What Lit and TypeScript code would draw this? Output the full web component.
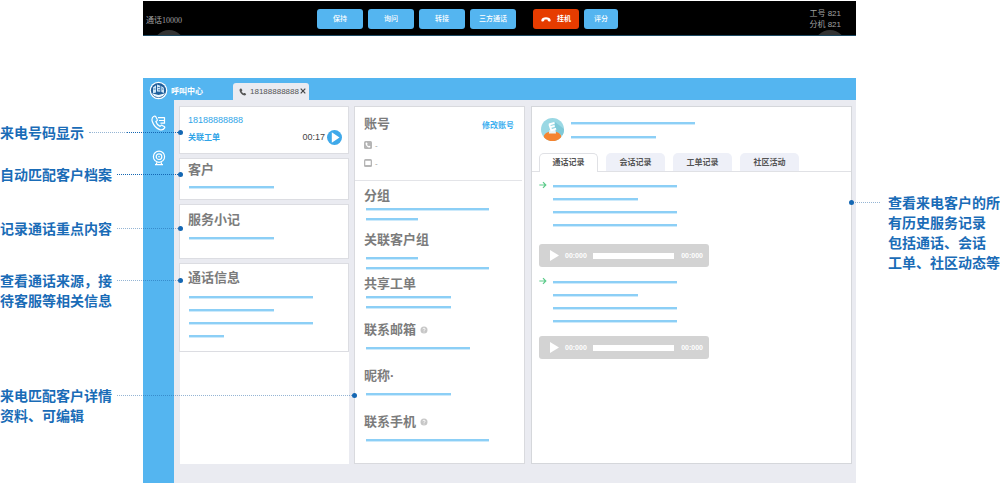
import { LitElement, html, css, svg } from "lit";
import { customElement, property } from "lit/decorators.js";
import { classMap } from "lit/directives/class-map.js";
import { styleMap } from "lit/directives/style-map.js";

const base = css`
  * { box-sizing: border-box; }
  button, a, h2, p, input { margin: 0; padding: 0; font: inherit; color: inherit; }
  button { border: 0; background: none; cursor: pointer; }
  a { text-decoration: none; }
  svg { display: block; }
`;

/* A stack of placeholder text lines, one per width. */
@customElement("text-lines")
class TextLines extends LitElement {
  @property({ attribute: false }) widths: number[] = [];

  static styles = css`
    :host { display: flex; flex-direction: column; gap: var(--line-gap, 11px); }
    .line { height: 2px; background: #8ccff6; box-shadow: 0 1px 0 #cdeafb; max-width: 100%; }
  `;

  render() {
    return this.widths.map((w) => html`<div class="line" style=${styleMap({ width: `${w}px` })}></div>`);
  }
}

@customElement("call-bar")
class CallBar extends LitElement {
  static styles = [base, css`
    :host {
      position: relative; overflow: hidden; display: flex; align-items: center;
      height: 35px; padding: 2px 15px 0 3px; background: #000; color: #a3a3a3;
      border-bottom: 1px solid #1d4a63; font-size: 8px;
    }
    .state { flex: 0 0 171px; font-family: "Liberation Serif", "Noto Sans CJK SC", serif; }
    .actions { display: flex; gap: 5px; }
    .btn {
      display: flex; align-items: center; justify-content: center; gap: 6px;
      width: 46px; height: 20px; border-radius: 3px; background: #54b5f0; color: #fff;
      font-size: 7px; line-height: 10px; font-weight: 500;
    }
    .hangup { margin-left: 12px; background: #e63c00; font-weight: 700; }
    .short { width: 34px; }
    .ids { margin-left: auto; line-height: 11px; }
    .knob { position: absolute; top: 29px; width: 32px; height: 32px; border-radius: 50%; background: #333; }
    .knob-left { left: 10px; }
    .knob-right { right: 10px; }
  `];

  render() {
    return html`
      <span class="knob knob-left"></span>
      <span class="knob knob-right"></span>
      <span class="state">通话10000</span>
      <div class="actions">
        ${["保持", "询问", "转接", "三方通话"].map((t) => html`<button class="btn">${t}</button>`)}
        <button class="btn hangup">
          <svg width="10" height="5" viewBox="0 0 10 5" aria-hidden="true">
            <path d="M.3 3.6C.3 1.4 2.6.3 5 .3s4.700 1.100 4.700 3.300c0 .9-.5 1.100-1.300.9l-1-.3c-.6-.2-.7-.5-.7-1.400-1.100-.4-2.300-.4-3.400 0 0 .9-.1 1.200-.7 1.400l-1 .3C.8 4.700.3 4.500.3 3.600z" fill="#fff"/>
          </svg>挂机
        </button>
        <button class="btn short">评分</button>
      </div>
      <div class="ids"><p>工号 821</p><p>分机 821</p></div>
    `;
  }
}

@customElement("side-note")
class SideNote extends LitElement {
  @property({ attribute: false }) lines: string[] = [];

  static styles = [base, css`
    :host { display: block; color: #1a6cb7; font-size: 14px; line-height: 20px; font-weight: 700; white-space: nowrap; }
  `];

  render() {
    return this.lines.map((l) => html`<p>${l}</p>`);
  }
}

const help = svg`<circle cx="4" cy="4" r="3.500" fill="#c6c6c6"/><path d="M2.900 3.200c0-1.400 2.200-1.400 2.200 0 0 .7-1.100.8-1.100 1.600M4 5.600v.8" fill="none" stroke="#fff" stroke-width=".9"/>`;

const handset = "M1.700.6C.6 1.200.3 2.200.8 3.500c.9 2.200 2.200 3.600 4.200 4.300 1 .3 1.900.1 2.500-.9.2-.3.1-.6-.2-.8l-1.200-.8c-.3-.2-.6-.1-.8.1l-.5.5C3.900 5.400 3.100 4.500 2.700 3.500l.6-.5c.3-.2.300-.5.200-.8L2.600.8C2.400.5 2.100.4 1.700.6z";

@customElement("contact-panel")
class ContactPanel extends LitElement {
  private groups = [
    { title: "分组", widths: [123, 52], cls: "near" },
    { title: "关联客户组", widths: [52, 123], cls: "" },
    { title: "共享工单", widths: [85, 85], cls: "near roomy" },
    { title: "联系邮箱", widths: [104], cls: "roomy", help: true },
    { title: "昵称·", widths: [85], cls: "roomy" },
    { title: "联系手机", widths: [123], cls: "roomy", help: true },
  ];

  static styles = [base, css`
    :host { display: block; background: #fff; border: 1px solid #d9dade; color: #7c7c7c; }
    .account { padding: 8px 8px 12px 9px; border-bottom: 1px solid #e3e4e8; margin-right: 2px; }
    .head { display: flex; align-items: center; justify-content: space-between; }
    .title { font-size: 13px; line-height: 18px; font-weight: 700; }
    .edit { padding-top: 4px; color: #3aaeef; font-size: 8px; line-height: 12px; font-weight: 700; }
    .field { display: flex; align-items: center; gap: 3px; height: 10px; margin-top: 7px; font-size: 8px; color: #999; }
    .field + .field { margin-top: 8px; }
    .groups { padding: 6px 9px 4px; }
    .group { min-height: 44px; }
    .roomy { min-height: 46px; }
    .row { display: flex; align-items: center; gap: 4px; }
    text-lines { --line-gap: 8px; margin: 8px 0 0 2px; }
    .near text-lines { margin-top: 3px; }
  `];

  render() {
    return html`
      <section class="account">
        <div class="head"><h2 class="title">账号</h2><a class="edit" href="#">修改账号</a></div>
        <div class="field">
          <svg width="8" height="8" viewBox="0 0 8 8"><rect width="8" height="8" rx="1.500" fill="#b5b5b5"/><path d=${handset} transform="translate(1.200 1.200) scale(.68)" fill="#fff"/></svg>-
        </div>
        <div class="field">
          <svg width="8" height="8" viewBox="0 0 8 8"><rect width="8" height="8" rx="1.500" fill="#b5b5b5"/><rect x="1.300" y="1.800" width="5.400" height="4.200" fill="#fff"/></svg>-
        </div>
      </section>
      <div class="groups">
        ${this.groups.map((g) => html`
          <section class="group ${g.cls}">
            <div class="row">
              <h2 class="title">${g.title}</h2>
              ${g.help ? html`<svg width="8" height="8" viewBox="0 0 8 8">${help}</svg>` : ""}
            </div>
            <text-lines .widths=${g.widths}></text-lines>
          </section>`)}
      </div>
    `;
  }
}

@customElement("history-panel")
class HistoryPanel extends LitElement {
  private tabs = ["通话记录", "会话记录", "工单记录", "社区活动"];

  static styles = [base, css`
    :host { display: block; background: #fff; border: 1px solid #d5d7db; color: #555; }
    .person { display: flex; align-items: center; gap: 7px; padding: 11px 9px 0; }
    .person text-lines { --line-gap: 12px; flex: 1; }
    .tabs { display: flex; gap: 8px; margin-top: 12px; padding: 0 7px; border-bottom: 1px solid #e0e1e5; }
    .tab {
      width: 59px; height: 18px; border-radius: 5px 5px 0 0; background: #eef0f8;
      font-size: 8px; line-height: 20px; font-weight: 700; color: #555;
    }
    .active { height: 19px; margin-bottom: -1px; background: #fff; border: 1px solid #e0e1e5; border-bottom: 0; line-height: 18px; }
    .records { display: grid; gap: 14px; padding: 13px 7px; }
    .entry { display: grid; grid-template-columns: 8px minmax(0, 1fr); column-gap: 6px; align-items: start; }
    .arrow { margin-top: -4px; }
    .player {
      display: flex; align-items: center; width: 170px; height: 23px; margin-top: 14px; padding: 0 6px 0 11px;
      border-radius: 3px; background: #d3d3d3; color: #fff; font-size: 7px; line-height: 10px; font-weight: 700;
    }
    .loose .player { margin-top: 18px; }
    .play { margin-right: 6px; }
    .seek { appearance: none; flex: 1; min-width: 0; height: 6px; margin: 0 7px 0 6px; background: #fff; }
    .seek::-webkit-slider-thumb { appearance: none; width: 0; height: 0; }
  `];

  private record(loose: boolean) {
    return html`
      <article class=${classMap({ record: true, loose })}>
        <div class="entry">
          <svg class="arrow" width="8" height="8" viewBox="0 0 8 8"><path d="M.3 4h6.400M4 1.200L6.800 4 4 6.800" fill="none" stroke="#5ccb8a" stroke-width="1.200"/></svg>
          <text-lines .widths=${[124, 85, 124, 124]}></text-lines>
        </div>
        <div class="player">
          <button class="play" aria-label="播放"><svg width="9" height="11" viewBox="0 0 9 11"><path d="M0 0l9 5.500L0 11z" fill="#fff"/></svg></button>
          <span>00:000</span>
          <input class="seek" type="range" value="0" aria-label="播放进度" />
          <span>00:000</span>
        </div>
      </article>`;
  }

  render() {
    return html`
      <div class="person">
        <svg width="23" height="23" viewBox="0 0 23 23">
          <defs><clipPath id="face"><circle cx="11.500" cy="11.500" r="11.500"/></clipPath></defs>
          <g clip-path="url(#face)">
            <rect width="23" height="23" fill="#9ad8e4"/>
            <path d="M14 4l9 7v7l-9-4z" fill="#7fc9d8"/>
            <ellipse cx="11.500" cy="19.500" rx="9" ry="6.300" fill="#f58430"/>
            <path d="M8.500 12h6l.5 3.500H7.800z" fill="#e9f5f7"/>
            <path d="M8 6.500l5.500-1.600M9.200 9.200l4.500-1.300M9.800 12.600l5.300-1.900M8.300 6.300l2 6" fill="none" stroke="#fff" stroke-width="1.900"/>
          </g>
        </svg>
        <text-lines .widths=${[124, 85]}></text-lines>
      </div>
      <div class="tabs" role="tablist">
        ${this.tabs.map((t, i) => html`<button role="tab" aria-selected=${i === 0} class=${classMap({ tab: true, active: i === 0 })}>${t}</button>`)}
      </div>
      <div class="records">${this.record(true)}${this.record(false)}</div>
    `;
  }
}

@customElement("call-center")
class CallCenter extends LitElement {
  static styles = [base, css`
    :host { display: grid; grid-template: 22px 1fr / 31px minmax(0, 1fr); background: #eaebf1; }
    .header { grid-column: 1 / -1; display: flex; align-items: stretch; padding-left: 6px; background: #54b5f0; color: #fff; }
    .brand { display: flex; align-items: center; gap: 3px; width: 84px; padding-top: 2px; font-size: 8px; font-weight: 700; }
    .call-tab {
      display: flex; align-items: center; gap: 3px; margin-top: 5px; padding: 0 3px 0 6px;
      border-radius: 3px 3px 0 0; background: #eaebf1; color: #555; font-size: 8px; line-height: 12px;
    }
    .close { display: flex; margin: 0 0 2px -2px; }
    .side { display: flex; flex-direction: column; align-items: center; gap: 19px; padding-top: 15px; background: #54b5f0; }
    .main { display: grid; grid-template-columns: 170px 171px minmax(0, 1fr); column-gap: 5px; padding: 6px 4px 19px 5px; }
    .column { display: flex; flex-direction: column; gap: 4px; }
    .column-end { flex: 1; margin: -4px 0 0 1px; background: #fff; }
    .card { padding: 2px 8px 11px; background: #fff; border: 1px solid #dcdde2; color: #7c7c7c; }
    .title { font-size: 13px; line-height: 18px; font-weight: 700; }
    .card text-lines { margin: 7px 0 0 1px; }
    .caller { padding: 6px 6px 8px 8px; color: #2fa4e7; }
    .number { font-size: 9px; line-height: 14px; }
    .ticket { display: flex; align-items: center; margin-top: 3px; }
    .ticket a { font-size: 8px; line-height: 15px; font-weight: 700; }
    .time { margin: 0 2px 0 auto; color: #444; font-size: 9px; line-height: 15px; }
    .memo { padding: 6px 8px 19px; }
    .card.memo text-lines { margin-top: 8px; }
    .info { padding: 5px 8px 14px; }
    .card.info text-lines { margin-top: 9px; }
    history-panel { margin-left: 1px; }
  `];

  render() {
    return html`
      <header class="header">
        <div class="brand">
          <svg width="19" height="19" viewBox="0 0 19 19">
            <circle cx="9.500" cy="9.500" r="8.800" fill="#fff"/>
            <circle cx="9.500" cy="9.500" r="7.600" fill="#1f5f9c"/>
            <path d="M4 6.500l3-2.300v7.200l-3 .8zM8 3.500l3.300 1.200v6L8 10.500zM12.300 5l2.700 2v5l-2.700-1z" fill="#cfe6f7"/>
            <path d="M2.800 12.300l6.700 1.800 6.700-1.800-2.300 2.600-4.400 1.500-4.400-1.500z" fill="#eaf5fc"/>
            <path d="M4.500 8h2M8.700 6.500h2M13 8h1.500M9 8.800h2" stroke="#1f5f9c" stroke-width=".8"/>
          </svg>
          <span>呼叫中心</span>
        </div>
        <div class="call-tab">
          <svg width="8" height="8" viewBox="0 0 8.500 8.500"><path d=${handset} fill="#555"/></svg>
          <span>18188888888</span>
          <button class="close" aria-label="关闭"><svg width="6" height="6" viewBox="0 0 6 6"><path d="M.7.7l4.600 4.600M5.300.7L.7 5.300" stroke="#444" stroke-width="1.200"/></svg></button>
        </div>
      </header>
      <nav class="side">
        <a href="#" aria-label="通话"><svg width="15" height="16" viewBox="0 0 15 16">
          <path d="M3 1.300C.8 2.400.5 4.200 1.400 6.800c1.300 3.700 3.800 6.500 7.300 7.800 2.200.7 3.900.1 4.900-1.700.3-.6.1-1-.4-1.300l-2-1.200c-.5-.3-.9-.2-1.300.2l-.8.8C7 10.400 5.500 8.700 4.900 6.500l1-.7c.5-.4.600-.8.300-1.300L4.800 1.700C4.300 1 3.700.9 3 1.300z" fill="none" stroke="#fff" stroke-width="1.200"/>
          <path d="M7 2.700h6.500M8 5.500h5.500M9.500 8.200h4M13.500 2.200v6.500" fill="none" stroke="#fff" stroke-width="1.200"/></svg></a>
        <a href="#" aria-label="视频"><svg width="14" height="16" viewBox="0 0 14 16">
          <circle cx="7" cy="6.700" r="5.600" fill="none" stroke="#fff" stroke-width="1.200"/>
          <circle cx="7" cy="6.700" r="2.800" fill="none" stroke="#fff" stroke-width="1.200"/>
          <circle cx="7" cy="6.700" r=".8" fill="#fff"/>
          <path d="M5 12.300l-.8 2.200M9 12.300l.8 2.200M3 14.600h8" fill="none" stroke="#fff" stroke-width="1.200"/></svg></a>
      </nav>
      <main class="main">
        <div class="column">
          <section class="card caller">
            <p class="number">18188888888</p>
            <div class="ticket">
              <a href="#">关联工单</a>
              <span class="time">00:17</span>
              <button aria-label="播放"><svg width="15" height="15" viewBox="0 0 15 15"><circle cx="7.500" cy="7.500" r="7.500" fill="#3fa9ea"/><path d="M4.800 2.300L12.500 7.500l-7.700 5.200z" fill="#fff"/></svg></button>
            </div>
          </section>
          <section class="card"><h2 class="title">客户</h2><text-lines .widths=${[85]}></text-lines></section>
          <section class="card memo"><h2 class="title">服务小记</h2><text-lines .widths=${[85]}></text-lines></section>
          <section class="card info"><h2 class="title">通话信息</h2><text-lines .widths=${[124, 85, 124, 35]}></text-lines></section>
          <div class="column-end"></div>
        </div>
        <contact-panel></contact-panel>
        <history-panel></history-panel>
      </main>
    `;
  }
}

@customElement("app-root")
class AppRoot extends LitElement {
  static styles = [base, css`
    :host {
      display: grid; grid-template-columns: 143px minmax(0, 1fr) 144px; row-gap: 42px;
      padding: 1px 0 7px; background: #fff;
      font-family: "Liberation Sans", "Noto Sans CJK SC", sans-serif;
    }
    call-bar { grid-column: 2; }
    .notes { grid-column: 1; }
    .note { position: relative; }
    .number { margin-top: 45px; }
    .profile { margin-top: 22px; }
    .memo { margin-top: 34px; }
    .source { margin-top: 32px; }
    .detail { margin-top: 75px; }
    .history { margin: 115px 0 0 32px; }

    /* Dotted leaders run from a note across the window to a round marker. */
    .leader { position: absolute; z-index: 1; top: 9px; left: 117px; width: 63px; border-top: 1px dotted rgba(20, 90, 160, 0.45); }
    .strong { border-top-color: #1467b3; }
    .faint { left: 89px; width: 38px; }
    .rest { left: 127px; width: 53px; }
    .long { width: 237px; }
    .back { left: -36px; width: 28px; }
    .leader::after { content: ""; position: absolute; top: -3px; right: -3px; width: 5px; height: 5px; border-radius: 50%; background: #1467b3; }
    .faint::after { content: none; }
    .back::after { right: auto; left: -3px; }
  `];

  render() {
    return html`
      <call-bar></call-bar>
      <aside class="notes">
        <div class="note number"><side-note .lines=${["来电号码显示"]}></side-note><span class="leader faint"></span><span class="leader strong rest"></span></div>
        <div class="note profile"><side-note .lines=${["自动匹配客户档案"]}></side-note><span class="leader strong"></span></div>
        <div class="note memo"><side-note .lines=${["记录通话重点内容"]}></side-note><span class="leader"></span></div>
        <div class="note source"><side-note .lines=${["查看通话来源，接", "待客服等相关信息"]}></side-note><span class="leader"></span></div>
        <div class="note detail"><side-note .lines=${["来电匹配客户详情", "资料、可编辑"]}></side-note><span class="leader long"></span></div>
      </aside>
      <call-center></call-center>
      <aside>
        <div class="note history"><side-note .lines=${["查看来电客户的所", "有历史服务记录", "包括通话、会话", "工单、社区动态等"]}></side-note><span class="leader back"></span></div>
      </aside>
    `;
  }
}
